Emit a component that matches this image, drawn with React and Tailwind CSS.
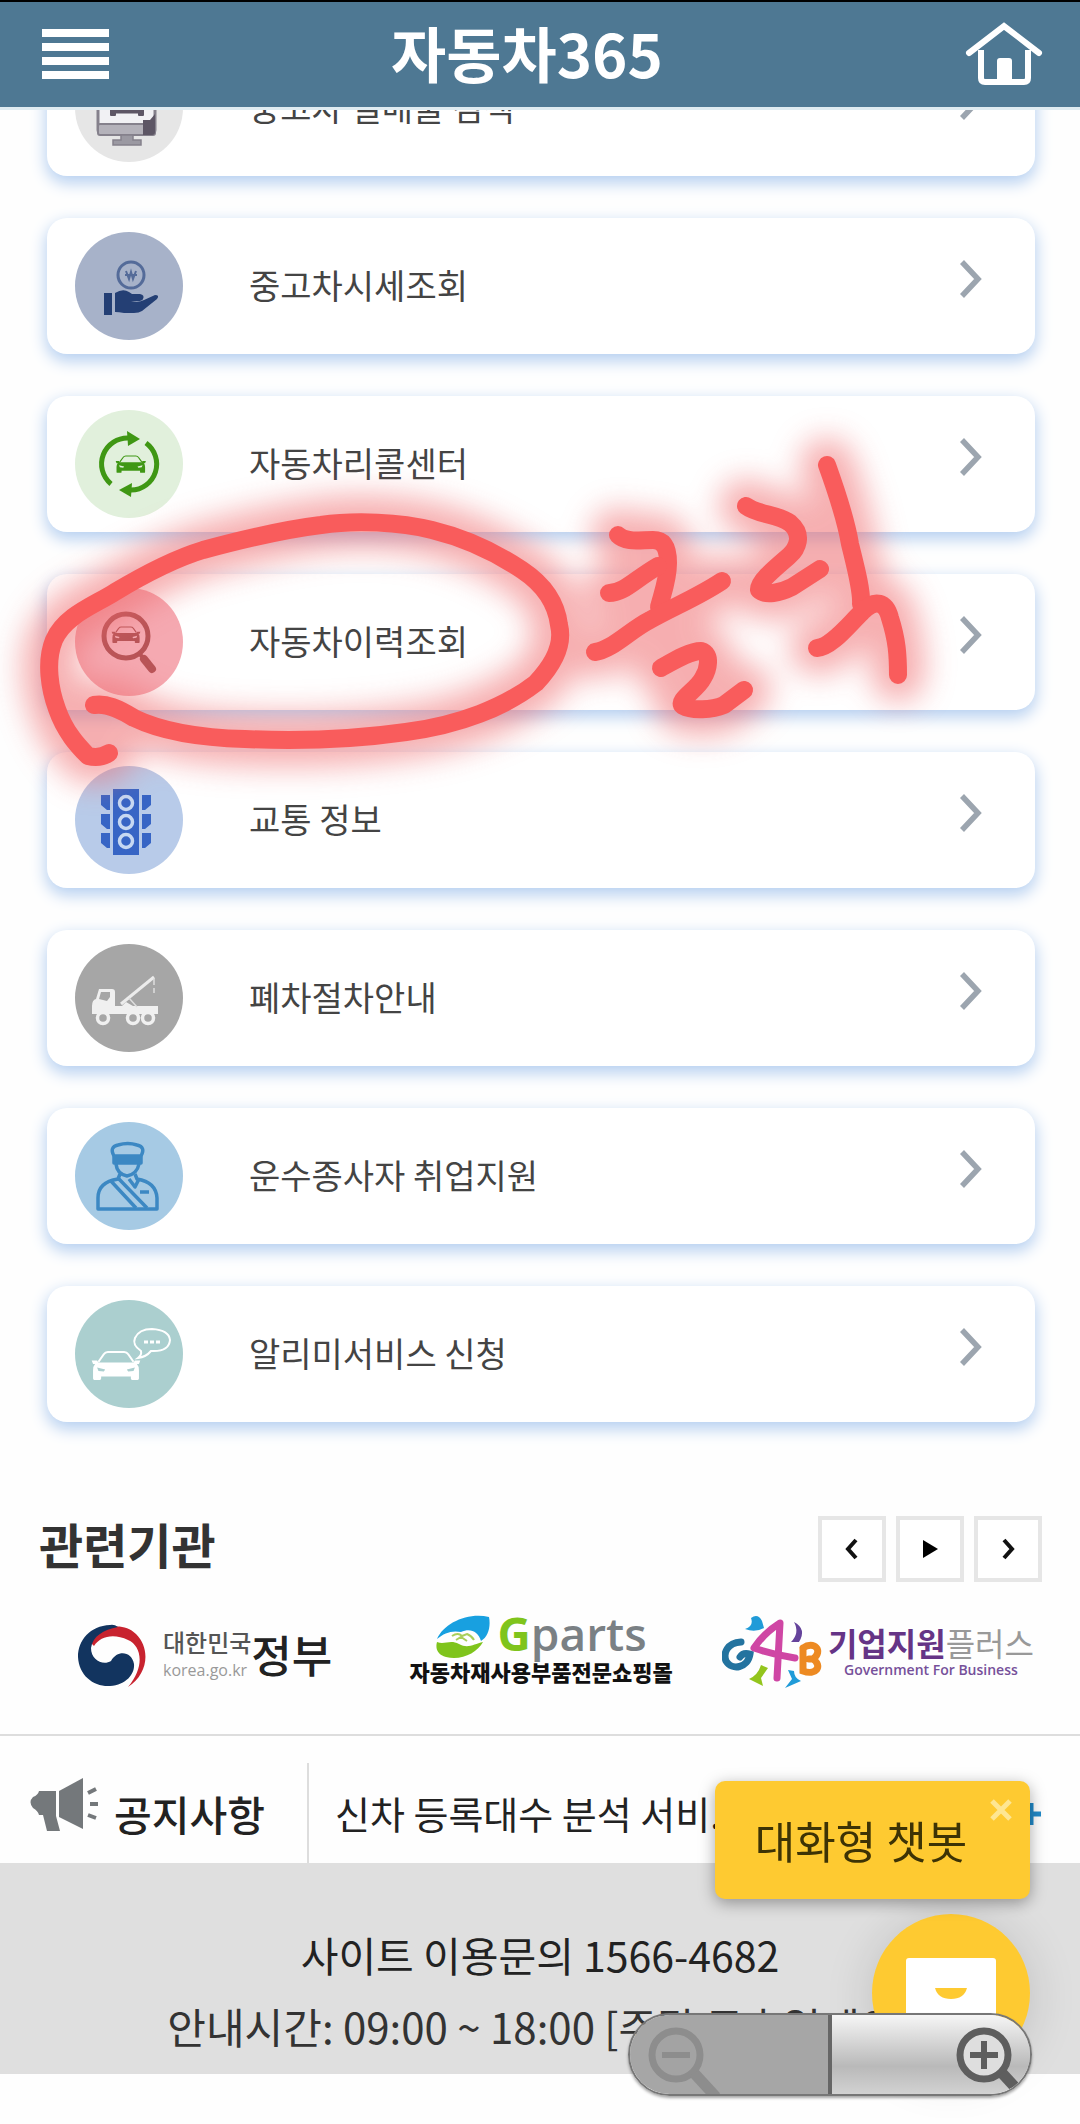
import React from "react";

const FONT = 'font-["Noto_Sans_CJK_KR","Noto_Sans",sans-serif]';

function Car({ color, glass }) {
  return (
    <g>
      <path d="M7 7 L11 1.5 Q12 0 14 0 H26 Q28 0 29 1.5 L33 7" fill={glass} stroke={color} strokeWidth="1.4" />
      <path d="M2 6 H6 L7 7.5 H33 L34 6 H38 L37 8.5 H35.5 Q37 10 37 13 V19 Q37 20 36 20 H32 Q31 20 31 19 V17.5 H9 V19 Q9 20 8 20 H4 Q3 20 3 19 V13 Q3 10 4.500 8.500 H3 Z" fill={color} />
      <path d="M6 11 L12 12.500 L11 14 L7 13.500 Z M34 11 L28 12.500 L29 14 L33 13.500 Z" fill={glass} />
    </g>
  );
}

function Disc({ fill, children }) {
  return (
    <svg viewBox="0 0 108 108" className="size-[108px] shrink-0" aria-hidden="true">
      <circle cx="54" cy="54" r="54" fill={fill} />
      {children}
    </svg>
  );
}

const MonitorIcon = () => (
  <Disc fill="#e6e6e6">
    <rect x="23" y="26" width="57" height="53" rx="3" fill="#f1f1f4" stroke="#85818c" strokeWidth="3" />
    <rect x="23" y="70" width="57" height="11" rx="2" fill="#b4b2ba" stroke="#85818c" strokeWidth="2" />
    <g transform="translate(32 42)"><Car color="#5d5665" glass="#f1f1f4" /></g>
    <path d="M68 66 h7 l5 -6 v18 q0 3 -3 3 h-9 z" fill="#5d5665" />
    <path d="M46 81 h12 v5 h8 v5 h-28 v-5 h8 z" fill="#9b99a2" stroke="#85818c" strokeWidth="1.5" />
  </Disc>
);

const PriceIcon = () => (
  <Disc fill="#a7b2c9">
    <circle cx="56" cy="43" r="13" fill="none" stroke="#546b99" strokeWidth="3" />
    <path d="M51 39 l3 8 l2 -7 l2 7 l3 -8 M50 43 h12" fill="none" stroke="#546b99" strokeWidth="2" />
    <path d="M29 61 h8 v22 h-8 z" fill="#243f74" />
    <path d="M40 61 q8 -5 14 -1 l3 2 h8 q5 1 3 5 q-1 2 -5 2 h-7 q8 2 13 -1 l11 -5 q5 0 2 4 l-15 12 q-3 2 -8 2 h-10 q-5 -1 -9 -1 z" fill="#243f74" />
  </Disc>
);

const RecallIcon = () => (
  <Disc fill="#e1f0dc">
    <path d="M36 74 A26 26 0 0 1 54 28" fill="none" stroke="#3f9714" strokeWidth="5" />
    <path d="M52 21 L65 29 L53 36 Z" fill="#3f9714" />
    <path d="M71 33 A26 26 0 0 1 56 80" fill="none" stroke="#3f9714" strokeWidth="5" />
    <path d="M57 73 L44 80 L56 87 Z" fill="#3f9714" />
    <g transform="translate(39 46) scale(.84)"><Car color="#3f9714" glass="#e1f0dc" /></g>
  </Disc>
);

const HistoryIcon = () => (
  <Disc fill="#f5a9b1">
    <circle cx="51" cy="48" r="22" fill="none" stroke="#b85457" strokeWidth="5" />
    <path d="M64 65 L69 71" stroke="#b85457" strokeWidth="4" />
    <path d="M69 71 L77 81" stroke="#b85457" strokeWidth="8" strokeLinecap="round" />
    <g transform="translate(35 39) scale(.8)"><Car color="#b85457" glass="#f5a9b1" /></g>
  </Disc>
);

const TrafficIcon = () => (
  <Disc fill="#b8cbe9">
    <rect x="38" y="23" width="26" height="66" fill="#3765c5" />
    {[37, 56, 75].map((y) => (
      <g key={y}>
        <circle cx="51" cy={y} r="6.500" fill="#3765c5" stroke="#c6d8f2" strokeWidth="3.500" />
        <path d={`M26 ${y - 8} h9 v15 h-3 l-6 -5 z M76 ${y - 8} h-9 v15 h3 l6 -5 z`} fill="#3765c5" />
      </g>
    ))}
  </Disc>
);

const CraneIcon = () => (
  <Disc fill="#a6a6a6">
    <path d="M21 55 L24 45 H37 Q40 45 40 48 V62 H47 L51 58 L58 62 H83 V70 H17 V62 Q17 56 21 55 Z" fill="#f0f0f0" />
    <path d="M24 55 L26 48 H35 V53 L32 57 Z" fill="#a6a6a6" />
    <path d="M46 60 L79 33" stroke="#ececec" strokeWidth="3" />
    <path d="M54 54 L62 63 M79 34 v7 m0 3 v5" stroke="#dedede" strokeWidth="1.500" fill="none" />
    {[28, 58, 73].map((x) => (
      <circle key={x} cx={x} cy="74" r="5.500" fill="#a6a6a6" stroke="#f0f0f0" strokeWidth="3.500" />
    ))}
  </Disc>
);

const OfficerIcon = () => (
  <Disc fill="#a6cae4">
    <g fill="none" stroke="#3c88c3" strokeWidth="3.500" strokeLinejoin="round">
      <path d="M39 34 Q34 25 43 23 Q53 20 62 23 Q71 25 66 34 Z" />
      <path d="M39 35 H66 V41 H39 Z" fill="#3c88c3" />
      <path d="M41 42 Q42 52 52 54 Q62 52 64 42" />
      <path d="M45 52 L43 57 Q23 60 23 76 V87 H82 V76 Q81 60 62 57 L60 52" />
      <path d="M35 58 L61 86 M43 56 L72 86 M54 57 L60 65 L64 57 M65 70 H74" />
    </g>
  </Disc>
);

const NotifyIcon = () => (
  <Disc fill="#abcfcf">
    <g transform="translate(14 52) scale(1.350 1.400)"><Car color="#ffffff" glass="#abcfcf" /></g>
    <path d="M66 51 Q57 45 60 38 Q64 29 77 29 Q94 30 95 40 Q94 52 76 51 Q71 57 63 58 Q67 55 66 51 Z" fill="none" stroke="#fff" strokeWidth="2" />
    <path d="M69 42 h4 m2 0 h4 m2 0 h4" stroke="#fff" strokeWidth="3" />
  </Disc>
);

const MENU = [
  ["중고차 실매물 검색", MonitorIcon],
  ["중고차시세조회", PriceIcon],
  ["자동차리콜센터", RecallIcon],
  ["자동차이력조회", HistoryIcon],
  ["교통 정보", TrafficIcon],
  ["폐차절차안내", CraneIcon],
  ["운수종사자 취업지원", OfficerIcon],
  ["알리미서비스 신청", NotifyIcon],
];

function MenuCard({ label, Icon }) {
  return (
    <li>
      <a
        href="#"
        className="flex h-[136px] items-center rounded-[20px] bg-white pl-7 pr-[53px] shadow-[0_6px_16px_1px_#b5cff0]"
      >
        <Icon />
        <span className="mb-[2px] ml-[66px] grow text-[34px] leading-[48px] text-[#444]">{label}</span>
        <svg viewBox="0 0 22 38" className="mb-[14px] h-[38px] w-[22px]" aria-hidden="true">
          <path d="M2 2 L18 19 L2 36" fill="none" stroke="#9ca5af" strokeWidth="5.500" />
        </svg>
      </a>
    </li>
  );
}

const STROKES = [
  "M94 125 C106 123 118 128 134 138 C165 153 205 158 245 159 C290 161 350 160 406 152 C460 145 505 127 536 103 C552 86 564 65 559 45 C556 20 540 2 522 -10 C495 -28 465 -42 432 -50 C400 -58 355 -60 321 -55 C280 -50 240 -40 203 -30 C170 -20 140 -3 115 12 C95 25 65 35 54 60 C45 82 50 110 57 129 C65 152 78 166 88 176 Q100 179 109 173",
  "M618 -45 C626 -37 640 -40 653 -40 C665 -40 668 -30 668 -17 C668 0 662 15 659 27",
  "M609 13 C624 13 634 0 658 -14",
  "M595 72 C612 70 630 50 650 40 C675 26 698 17 722 1",
  "M661 88 C675 80 690 71 701 71 C712 74 708 90 703 98 C697 110 676 121 683 126 C692 131 712 130 724 125 L744 110",
  "M746 -74 C758 -65 778 -66 790 -57 C804 -45 797 -31 789 -24 C775 -12 758 2 759 10 C765 16 780 13 792 7 L820 -11",
  "M827 -115 C836 -90 846 -60 850 -36 C855 -15 862 10 861 24",
  "M817 68 C832 67 850 43 862 32 C875 18 886 22 890 38 C897 60 898 75 898 95",
];

function PenMarks() {
  return (
    <svg
      viewBox="0 -160 1080 380"
      className="pointer-events-none absolute inset-x-0 top-[380px] z-10 w-full overflow-visible"
      role="img"
      aria-label="클릭"
    >
      <defs>
        <filter id="glow" x="-20%" y="-30%" width="140%" height="160%">
          <feGaussianBlur stdDeviation="15" />
        </filter>
      </defs>
      <g fill="none" strokeLinecap="round" strokeLinejoin="round">
        <g stroke="#ee6669" strokeWidth="54" opacity=".52" filter="url(#glow)">
          {STROKES.map((d) => <path key={d} d={d} />)}
        </g>
        <g stroke="#f95c5c" strokeWidth="18">
          {STROKES.map((d) => <path key={d} d={d} />)}
        </g>
      </g>
    </svg>
  );
}

function Header() {
  return (
    <header className="relative z-20 flex h-[110px] items-center justify-between border-t-2 border-b-3 border-t-black border-b-[#dfebf1] bg-[#4e7893] pl-[42px] pr-[37px] pb-[2px]">
      <button type="button" aria-label="메뉴" className="flex w-[67px] flex-col gap-[6px]">
        <span className="h-2 bg-white" />
        <span className="h-2 bg-white" />
        <span className="h-2 bg-white" />
        <span className="h-2 bg-white" />
      </button>
      <h1 className="pr-5 pb-1 text-[60px] leading-[80px] font-bold text-white">자동차365</h1>
      <a href="#" aria-label="홈">
        <svg viewBox="0 0 78 66" className="h-[66px] w-[78px]" fill="none" stroke="#fff">
          <path d="M4 32 L39 5 L74 32" strokeWidth="6" strokeLinecap="round" />
          <path d="M16 29 V57 Q16 61 20 61 H59 Q63 61 63 57 V29" strokeWidth="6" />
          <path d="M32 61 V40 Q32 37 35 37 H44 Q47 37 47 40 V61 Z" fill="#fff" stroke="none" />
        </svg>
      </a>
    </header>
  );
}

function CarouselButton({ label, children }) {
  return (
    <button type="button" aria-label={label} className="grid h-[66px] w-[68px] place-items-center border-4 border-[#e6e6e6] bg-white">
      <svg viewBox="0 0 20 24" className="h-6 w-5" fill="none" stroke="#111" strokeWidth="4">{children}</svg>
    </button>
  );
}

function Agencies() {
  return (
    <section className="border-b-2 border-[#ddd] pt-[94px] pb-[39px]">
      <div className="flex h-[66px] items-center justify-between pr-[38px] pl-[39px]">
        <h2 className="pb-3 text-[48px] leading-[66px] font-bold text-[#333]">관련기관</h2>
        <div className="flex gap-[10px]">
          <CarouselButton label="이전"><path d="M14 3 L6 12 L14 21" /></CarouselButton>
          <CarouselButton label="재생"><path d="M3 3 L18 12 L3 21 Z" fill="#000" stroke="none" /></CarouselButton>
          <CarouselButton label="다음"><path d="M6 3 L14 12 L6 21" /></CarouselButton>
        </div>
      </div>
      <div className="mt-[33px] flex h-20 items-start pr-[46px] pl-[78px]">
        <a href="#" className="flex items-start gap-[15px] pt-[9px]">
          <svg viewBox="0 0 70 64" className="h-16 w-[70px]" aria-hidden="true">
            <path d="M12 18 C22 2 44 -3 58 10 C73 25 70 50 50 63 C67 43 64 22 50 16 C36 9 22 12 16 22 Z" fill="#c8232f" />
            <path d="M32 1 C12 2 0 16 0 33 C1 52 16 63 32 62 C48 61 57 50 56 40 C54 28 40 25 33 37 C25 42 13 36 13 24 C15 12 25 6 40 3 Q36 0 32 1 Z" fill="#12345f" />
          </svg>
          <span className="flex items-start">
            <span className="flex flex-col">
              <span className="text-[24px] leading-9 font-medium text-[#555]">대한민국</span>
              <span className="font-['Open_Sans',sans-serif] text-[16px] leading-5 text-[#999]">korea.go.kr</span>
            </span>
            <span className="text-[44px] leading-[60px] font-medium text-[#222]">정부</span>
          </span>
        </a>
        <a href="#" className="mx-auto flex flex-col items-center pl-7">
          <span className="flex h-[44px] items-center gap-2">
            <svg viewBox="0 0 54 44" className="h-11 w-[54px]" aria-hidden="true">
              <path d="M1 24 C8 8 32 -3 53 2 C55 12 52 22 45 26 C42 16 34 13 25 17 C16 15 8 18 1 24 Z" fill="#18a0e0" />
              <path d="M1 27 C9 30 14 24 23 29 C32 34 38 29 47 27 C41 38 25 46 10 42 C2 40 -1 34 1 27 Z" fill="#7fc41c" />
              <path d="M16 21 q6 -4 10 0 l5 -2 q5 2 7 6 M20 25 l5 -3 l6 4" fill="none" stroke="#a9cf5a" strokeWidth="2" />
            </svg>
            <span className="pb-2 font-['Open_Sans',sans-serif] text-[46px] leading-[44px] font-semibold text-[#7a8084]">
              <span className="font-bold text-[#7fc41c]">G</span>parts
            </span>
          </span>
          <span className="text-[22px] leading-6 font-black text-[#111]">자동차재사용부품전문쇼핑몰</span>
        </a>
        <a href="#" className="flex items-start gap-1">
          <svg viewBox="0 0 102 76" className="h-[76px] w-[102px]" fill="none" strokeLinecap="round" aria-hidden="true">
            <path d="M19 27 C5 28 1 38 4 46 C10 56 26 53 28 39 Q21 37 18 42" stroke="#23739f" strokeWidth="7" />
            <path d="M55 63 L58 8 Q42 18 32 33 Q52 40 73 43" stroke="#cf46a4" strokeWidth="7" strokeLinejoin="round" />
            <path d="M81 33 V56 C94 61 101 51 91 44 C102 36 92 25 81 33 M87 44 H91" stroke="#ed8a22" strokeWidth="7" />
            <path d="M23 14 Q32 11 29 3 Q36 -2 40 6 L42 13 Q33 18 23 14 Z" fill="#209bd8" />
            <path d="M72 7 Q85 14 77 27 L69 27 Q78 18 72 7 Z" fill="#65439b" />
            <path d="M27 64 Q36 60 39 50 L46 53 L39 63 L41 71 Z" fill="#93c51d" />
            <path d="M66 55 L70 64 L63 73 L79 66 Q72 63 72 56 Z" fill="#209bd8" />
          </svg>
          <span className="flex flex-col items-center pt-[9px]">
            <span className="text-[32px] leading-[36px] font-bold text-[#653486]">
              기업지원<span className="font-normal text-[#999]">플러스</span>
            </span>
            <span className="font-['Open_Sans',sans-serif] text-[14px] leading-5 font-semibold text-[#76509a]">Government For Business</span>
          </span>
        </a>
      </div>
    </section>
  );
}

function Notice() {
  return (
    <section className="flex h-[127px] items-end pr-[39px] pl-[30px]">
      <h2 className="flex h-[100px] w-[279px] items-center border-r-2 border-[#ddd] text-[41px] leading-[60px] font-medium text-[#222]">
        <svg viewBox="0 0 70 54" className="mr-[14px] mb-4 h-[54px] w-[70px]" fill="#74787b" aria-hidden="true">
          <path d="M9 13 H26 V38 L30 53 H17 L13 37 H9 Q8 33 3 30 Q-2 24 3 19 Q8 17 9 13 Z" />
          <path d="M29 13 L53 0 V51 L29 39 Z" />
          <path d="M58 15 L66 11 M60 26 H68 M58 37 L66 40" stroke="#74787b" strokeWidth="4" />
        </svg>
        공지사항
      </h2>
      <a href="#" className="mb-5 ml-[26px] min-w-0 grow text-[38px] leading-[60px] text-[#222]">신차 등록대수 분석 서비...</a>
      <a href="#" aria-label="더보기" className="mb-[38px]">
        <svg viewBox="0 0 20 22" className="h-[22px] w-5" stroke="#2089c8" strokeWidth="5"><path d="M10 0 V22 M0 11 H20" /></svg>
      </a>
    </section>
  );
}

function ZoomGlass({ color, light, plus }) {
  return (
    <svg viewBox="0 0 78 78" className="size-[78px]" fill="none" stroke={color} aria-hidden="true">
      <circle cx="32" cy="36" r="24" strokeWidth="7" fill={light} />
      <path d={plus ? "M18 36 H46 M32 22 V50" : "M18 36 H46"} strokeWidth="6" />
      <path d="M50 54 L72 78" strokeWidth="11" />
    </svg>
  );
}

function FloatingControls() {
  return (
    <div className="pointer-events-none fixed right-12 bottom-7 z-30 flex flex-col items-end [&_button]:pointer-events-auto">
      <div className="relative mr-[2px] h-[118px] w-[315px] rounded-[10px] bg-[#feca31] shadow-[0_4px_16px_rgba(0,0,0,0.35)]">
        <button type="button" className="h-full w-full pr-[23px] text-center text-[44px] leading-[60px] text-[#3d3305]">대화형 챗봇</button>
        <button type="button" aria-label="닫기" className="absolute top-[18px] right-[18px]">
          <svg viewBox="0 0 22 22" className="size-[22px]" stroke="#fee692" strokeWidth="5"><path d="M2 2 L20 20 M20 2 L2 20" /></svg>
        </button>
      </div>
      <button type="button" aria-label="챗봇 열기" className="mt-[15px] mr-[2px] size-[158px] rounded-full bg-[#feca31] shadow-[0_4px_50px_rgba(0,0,0,0.14)]">
        <svg viewBox="0 0 158 158" className="size-full" aria-hidden="true">
          <rect x="34" y="44" width="90" height="76" rx="3" fill="#fff" />
          <path d="M63 74 H95 Q92 85 79 85 Q66 85 63 74 Z" fill="#feca31" />
        </svg>
      </button>
      <div className="relative -mt-[59px] flex h-[83px] w-[404px] overflow-hidden rounded-full border-2 border-[#777] shadow-[0_2px_3px_rgba(0,0,0,0.35)]">
        <button type="button" disabled aria-label="축소" className="flex w-[202px] items-start border-r-4 border-[#666] bg-[#a6a6a6] pt-1 pl-[14px]">
          <ZoomGlass color="#8d8d8d" light="#a3a3a3" />
        </button>
        <button type="button" aria-label="확대" className="flex grow items-start justify-end bg-linear-to-b from-[#f6f6f6] via-[#b9b9b9] via-65% to-[#d2d2d2] pt-1">
          <ZoomGlass color="#5e5e5e" light="#dedede" plus />
        </button>
      </div>
    </div>
  );
}

export default function App() {
  return (
    <div className={`${FONT} min-h-screen overflow-x-hidden bg-[#fefefe] text-[#222]`}>
      <Header />
      <main>
        <nav className="relative -mt-[70px] pr-[45px] pl-[47px]" aria-label="주요 서비스">
          <ul className="flex flex-col gap-[42px]">
            {MENU.map(([label, Icon]) => <MenuCard key={label} label={label} Icon={Icon} />)}
          </ul>
          <PenMarks />
        </nav>
        <Agencies />
        <Notice />
      </main>
      <footer className="bg-[#dfdfdf] pt-[55px] pb-[12px] text-center text-[41px] leading-[72px] whitespace-nowrap">
        <p>사이트 이용문의 1566-4682</p>
        <p className="text-[42px] text-[#333]">안내시간: 09:00 ~ 18:00 [주말 공휴일제외]</p>
      </footer>
      <FloatingControls />
    </div>
  );
}
